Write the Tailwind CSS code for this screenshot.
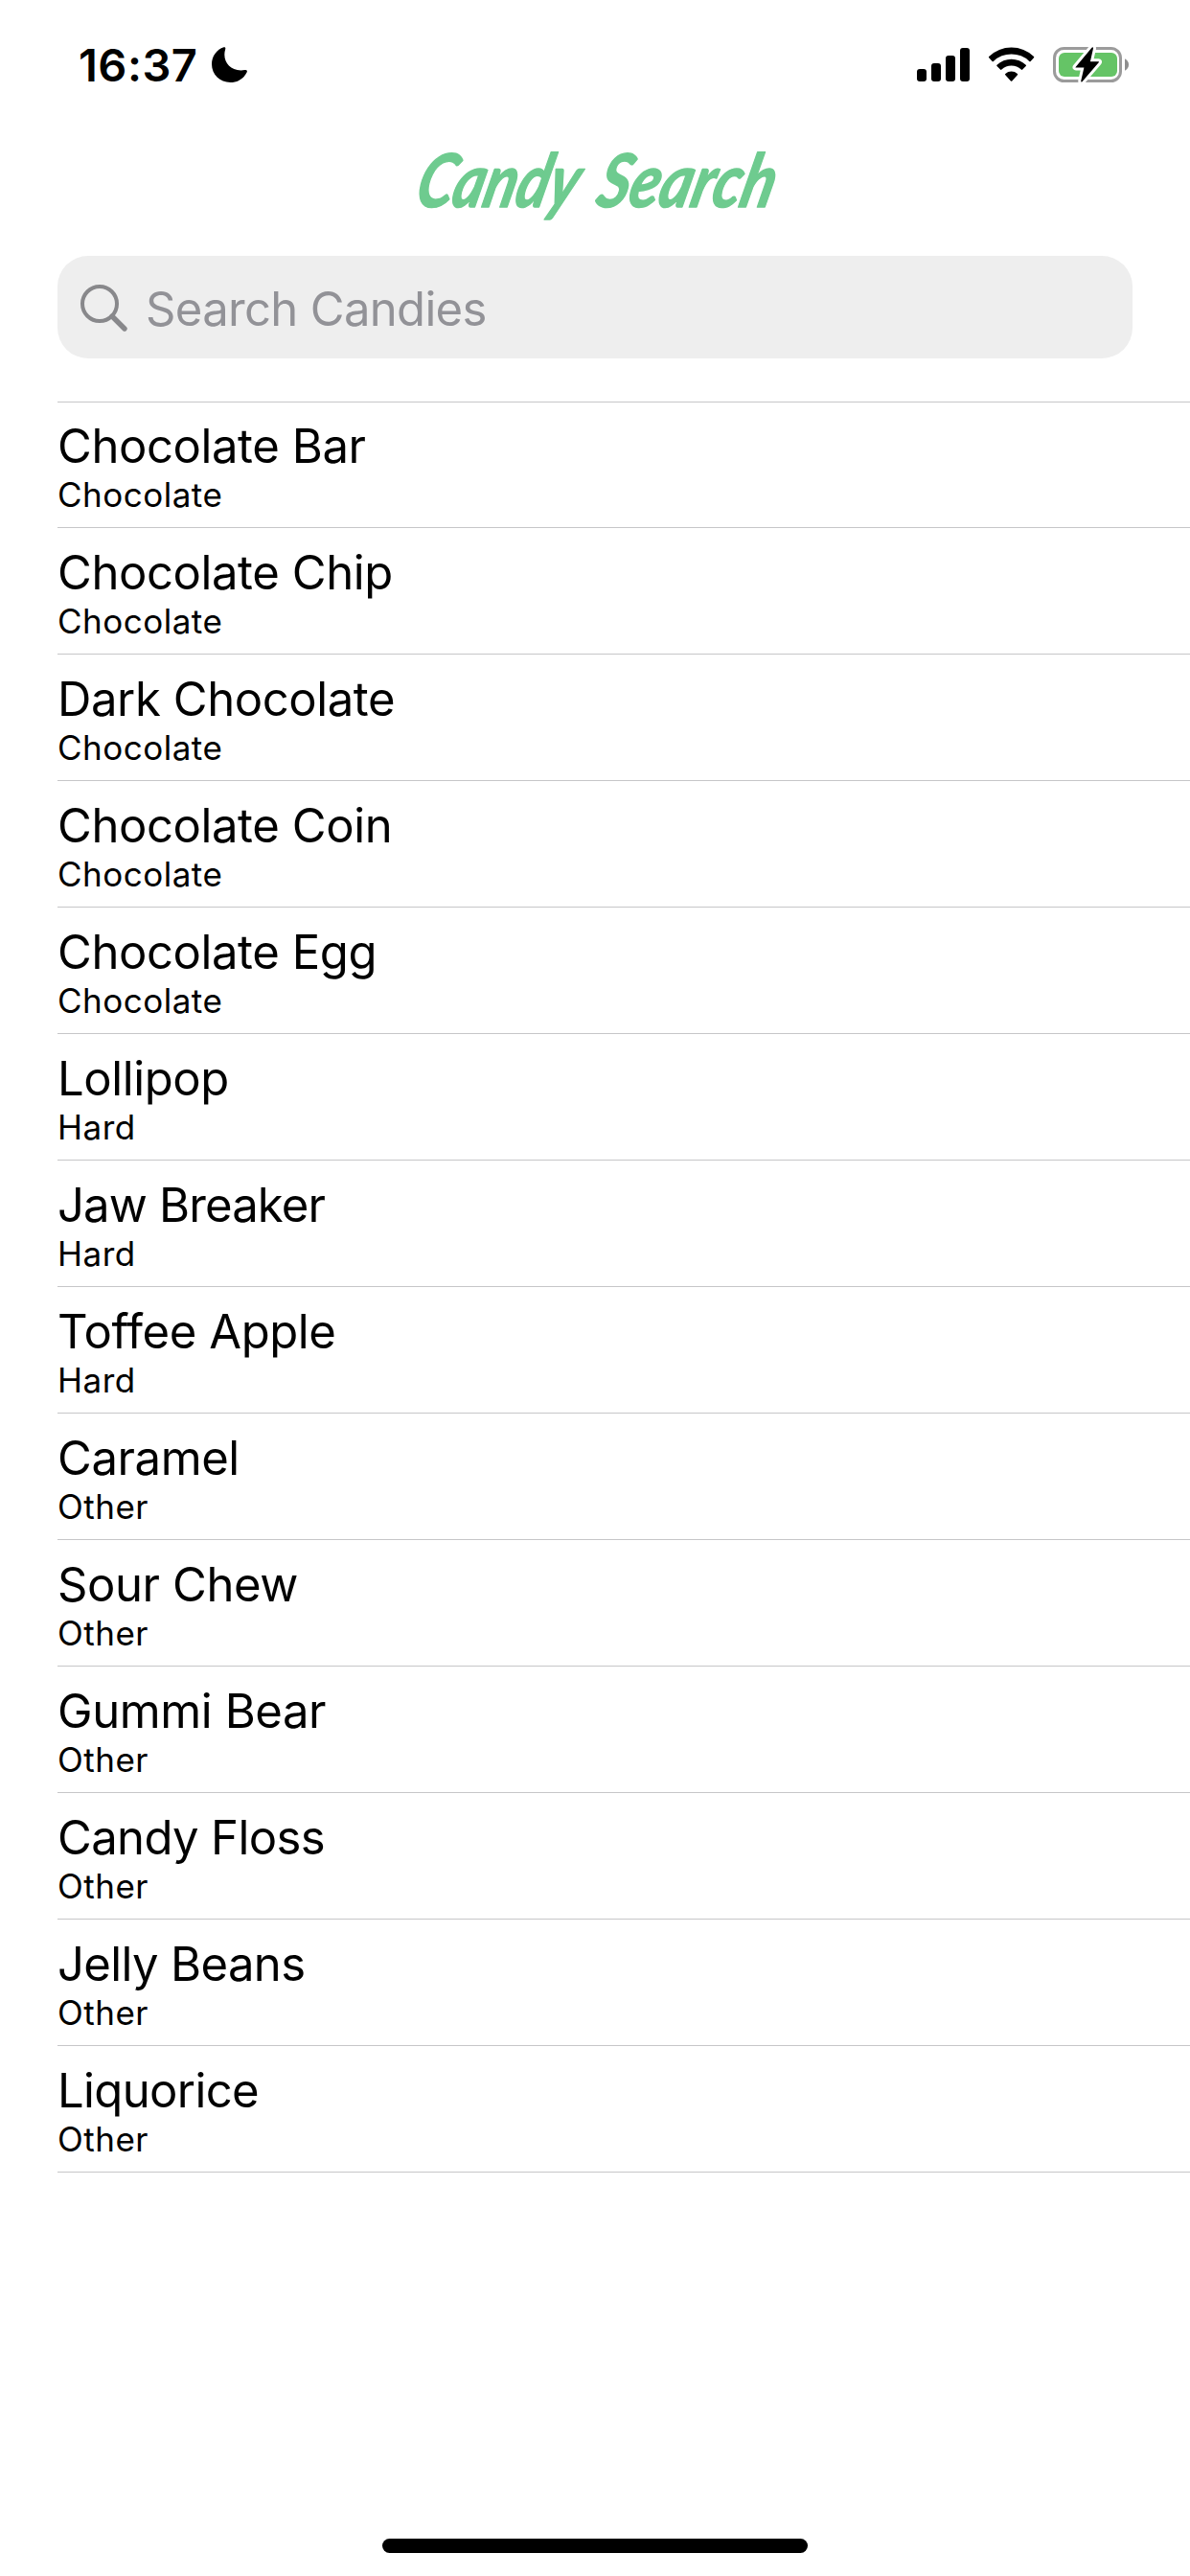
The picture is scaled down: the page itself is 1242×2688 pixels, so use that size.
<!DOCTYPE html>
<html lang="en">
<head>
<meta charset="utf-8">
<title>Candy Search</title>
<script src="https://cdn.jsdelivr.net/npm/@tailwindcss/browser@4"></script>
</head>
<body class="flex h-[2688px] w-[1242px] flex-col overflow-hidden bg-white font-[Inter,sans-serif] text-black">
  <!-- Status bar -->
  <header class="flex h-[132px] shrink-0 items-start justify-between pt-[40px] pr-[60px] pl-[82px]">
    <div class="flex items-start">
      <span class="w-[139px] text-[47px] leading-[56px] font-semibold tracking-[0.5px]">16:37</span>
      <svg class="mt-[9px] h-[38px] w-[38px]" viewBox="0 0 38 38" aria-hidden="true">
        <path d="M12.6 .3C14 .1 14.6 1 14.2 2.3 10.400 14.500 19 26.500 34.400 24.100 36.300 23.700 37.300 24.700 36.700 26.200 33.700 32.800 27 37 19.500 37 8.500 37 0 28.500 0 18 0 9.700 5.200 2.700 12.600 .3Z"/>
      </svg>
    </div>
    <div class="flex items-start pt-[8px]">
      <svg class="h-[40px] w-[225px]" viewBox="957 48 225 40" aria-hidden="true">
        <rect x="957" y="72" width="10" height="13" rx="3"/>
        <rect x="972" y="66" width="10" height="19" rx="3"/>
        <rect x="987" y="58" width="10" height="27" rx="3"/>
        <rect x="1002" y="50" width="10" height="35" rx="3"/>
        <path d="M1032.200 58.900A34 34 0 0 1 1079 58.900Q1079.600 59.600 1079 60.200L1075.600 63.900Q1075 64.500 1074.300 63.900A27 27 0 0 0 1036.900 63.900Q1036.200 64.500 1035.600 63.900L1032.200 60.200Q1031.600 59.600 1032.200 58.900Z"/>
        <path d="M1040.500 67.800A22 22 0 0 1 1070.700 67.800Q1071.400 68.500 1070.700 69.100L1067.200 72.600Q1066.500 73.200 1065.800 72.600A15 15 0 0 0 1045.400 72.600Q1044.700 73.200 1044 72.600L1040.500 69.100Q1039.800 68.500 1040.500 67.800Z"/>
        <path d="M1049.300 77A9.500 9.500 0 0 1 1061.900 77Q1062.600 77.600 1061.900 78.300L1056.300 84.400Q1055.600 85 1054.900 84.400L1049.300 78.300Q1048.600 77.600 1049.300 77Z"/>
        <rect x="1100.500" y="50.500" width="69" height="34" rx="10" fill="none" stroke="#9b9b9b" stroke-width="3"/>
        <rect x="1105" y="55" width="61" height="25" rx="6" fill="#65c466"/>
        <path d="M1174 61.300Q1178 63.500 1178 67.500T1174 73.700Z" fill="#8e8e8e"/>
        <path d="M1139.500 49.800L1122.600 70Q1122.200 70.600 1123 70.600H1131.400L1128.200 84.600Q1128.200 86.200 1129.700 85L1146.900 65Q1147.300 64.200 1146.500 64.200H1137.900L1141 50.500Q1141 48.600 1139.500 49.800Z" fill="#000" stroke="#fff" stroke-width="6" stroke-linejoin="round" paint-order="stroke"/>
      </svg>
    </div>
  </header>

  <!-- Wordmark -->
  <h1 class="flex h-[135px] shrink-0 justify-center">
    <svg class="h-[135px] w-[420px] overflow-visible" viewBox="411 132 420 135" fill="#6ecb8f" stroke="#6ecb8f" stroke-width="1.500" stroke-linejoin="round" font-family="Lato, sans-serif" font-weight="700" font-style="italic" font-size="77">
      <text transform="translate(431 216) skewX(-14)" textLength="168" lengthAdjust="spacingAndGlyphs">Candy</text>
      <text transform="translate(620 216) skewX(-14)" textLength="184" lengthAdjust="spacingAndGlyphs">Search</text>
    </svg>
  </h1>

  <!-- Search field -->
  <div class="mr-[60px] ml-[60px] flex h-[107px] shrink-0 items-start rounded-[32px] bg-[#eeeeee] pt-[25px] pl-[23px]">
    <svg class="mt-[4px] h-[52px] w-[69px]" viewBox="83 296 69 52" fill="none" stroke="#88888b" aria-hidden="true">
      <circle cx="104" cy="317" r="18" stroke-width="4"/>
      <path d="M117 330L130 343" stroke-width="5.400" stroke-linecap="round"/>
    </svg>
    <span class="text-[49px] leading-[61px] tracking-[-0.660px] text-[#929297]">Search Candies</span>
  </div>

  <!-- Candy list -->
  <ul id="list" class="mt-[45px] ml-[60px] flex flex-col border-t border-[#c6c6c8]"></ul>

  <footer class="mt-auto flex justify-center pb-[24px]">
    <div class="h-[15px] w-[444px] rounded-full bg-black"></div>
  </footer>

  <script>
    const normal = "tracking-[-0.400px]", snug = "tracking-[-0.620px]", tight = "tracking-[-0.850px]";
    const candies = [
      ["Chocolate Bar", "Chocolate", normal], ["Chocolate Chip", "Chocolate", normal],
      ["Dark Chocolate", "Chocolate", normal], ["Chocolate Coin", "Chocolate", normal],
      ["Chocolate Egg", "Chocolate", normal], ["Lollipop", "Hard", normal],
      ["Jaw Breaker", "Hard", tight], ["Toffee Apple", "Hard", normal],
      ["Caramel", "Other", normal], ["Sour Chew", "Other", normal],
      ["Gummi Bear", "Other", normal], ["Candy Floss", "Other", snug],
      ["Jelly Beans", "Other", snug], ["Liquorice", "Other", snug]
    ];
    document.getElementById("list").innerHTML = candies.map(([name, kind, tracking]) => `
      <li class="flex h-[132px] flex-col justify-end border-b border-[#c6c6c8] pb-[14px] first:h-[131px]">
        <span class="text-[49px] leading-[61px] ${tracking}">${name}</span>
        <span class="text-[35px] leading-[40px] tracking-[0.500px]">${kind}</span>
      </li>`).join("");
  </script>
</body>
</html>
